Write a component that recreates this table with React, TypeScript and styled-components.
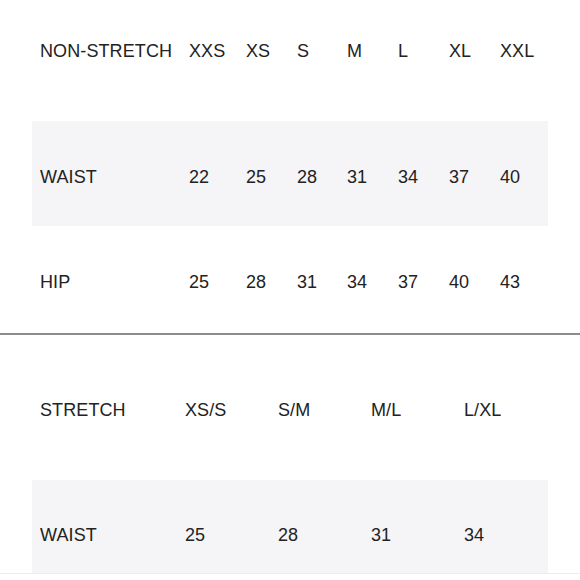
import React from 'react'
import styled, { createGlobalStyle } from 'styled-components'

const GlobalStyle = createGlobalStyle`
    html, body {
        margin: 0;
        padding: 0;
        background: #fff;
    }
    body {
        font-family: "Liberation Sans", Arial, Helvetica, sans-serif;
        color: #222;
    }
`;

const Page = styled.div`
    width: 580px;
    height: 580px;
    overflow: hidden;
    display: flex;
    flex-direction: column;
`;

const Table = styled.div`
    display: flex;
    flex-direction: column;
    padding: 0 32px;
`;

const Row = styled.div<{ $cols: string; $height: number; $shade?: boolean; $shift?: number }>`
    display: grid;
    grid-template-columns: ${p => p.$cols};
    align-items: center;
    height: ${p => p.$height}px;
    box-sizing: border-box;
    padding-top: ${p => (p.$shift || 0) * 2}px;
    background: ${p => (p.$shade ? '#f5f5f7' : 'transparent')};
    font-size: 18px;
    line-height: 1;
    letter-spacing: 0.1px;
`;

const Label = styled.span`
    padding-left: 8px;
`;

const Cell = styled.span``;

const Divider = styled.hr`
    margin: 2px 0 0;
    border: 0;
    height: 2px;
    background: #8c8c8c;
`;

const Footer = styled.div`
    border-top: 1px solid #ededed;
`;

const NON_STRETCH_COLS = '157px 57px 51px 50px 51px 51px 51px 1fr'
const STRETCH_COLS = '153px 93px 93px 93px 1fr'

const nonStretch = {
    sizes: ['XXS', 'XS', 'S', 'M', 'L', 'XL', 'XXL'],
    rows: [
        { name: 'WAIST', values: [22, 25, 28, 31, 34, 37, 40] },
        { name: 'HIP', values: [25, 28, 31, 34, 37, 40, 43] },
    ],
}

const stretch = {
    sizes: ['XS/S', 'S/M', 'M/L', 'L/XL'],
    rows: [{ name: 'WAIST', values: [25, 28, 31, 34] }],
}

const App = () => {
    return (
        <Page>
            <GlobalStyle />
            <Table>
                <Row $cols={NON_STRETCH_COLS} $height={101} style={{ marginBottom: 20 }}>
                    <Label>NON-STRETCH</Label>
                    {nonStretch.sizes.map(s => <Cell key={s}>{s}</Cell>)}
                </Row>
                {nonStretch.rows.map((r, i) => (
                    <Row key={r.name} $cols={NON_STRETCH_COLS} $height={105} $shade={i % 2 === 0} $shift={3}>
                        <Label>{r.name}</Label>
                        {r.values.map((v, j) => <Cell key={j}>{v}</Cell>)}
                    </Row>
                ))}
            </Table>
            <Divider />
            <Table>
                <Row $cols={STRETCH_COLS} $height={145} $shift={2}>
                    <Label>STRETCH</Label>
                    {stretch.sizes.map(s => <Cell key={s}>{s}</Cell>)}
                </Row>
                {stretch.rows.map(r => (
                    <Row key={r.name} $cols={STRETCH_COLS} $height={93} $shade $shift={8}>
                        <Label>{r.name}</Label>
                        {r.values.map((v, j) => <Cell key={j}>{v}</Cell>)}
                    </Row>
                ))}
            </Table>
            <Footer />
        </Page>
    )
}

export default App
